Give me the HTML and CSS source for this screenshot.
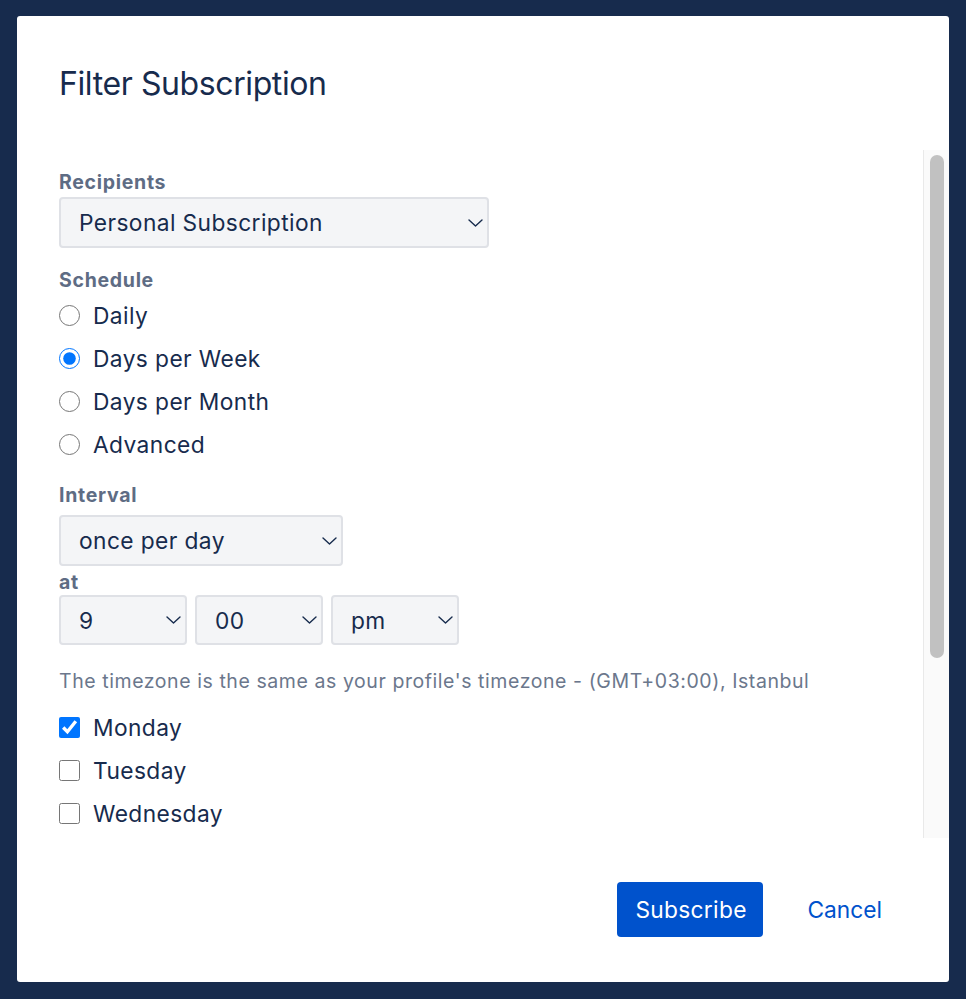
FILE: index.html
```html
<!DOCTYPE html>
<html>
<head>
<meta charset="utf-8">
<link rel="stylesheet" href="styles.css">
</head>
<body>
<div class="dialog">
  <header class="dialog-header">
    <h1 class="title">Filter Subscription</h1>
  </header>
  <div class="dialog-body">
    <div class="scroll-content">
      <div class="field-label first">Recipients</div>
      <div class="select-wrap w-recipients">
        <select class="select"><option>Personal Subscription</option></select>
        <svg class="chev" viewBox="0 0 15 8" width="15" height="8"><path d="M1 1l6.5 6 6.5-6" fill="none" stroke="#172B4D" stroke-width="1.4" stroke-linecap="round" stroke-linejoin="round"/></svg>
      </div>

      <div class="field-label">Schedule</div>
      <div class="option-list">
        <label class="option"><input type="radio" name="s"><span>Daily</span></label>
        <label class="option"><input type="radio" name="s" checked><span>Days per Week</span></label>
        <label class="option"><input type="radio" name="s"><span>Days per Month</span></label>
        <label class="option"><input type="radio" name="s"><span>Advanced</span></label>
      </div>

      <div class="field-label interval">Interval</div>
      <div class="select-wrap w-interval">
        <select class="select"><option>once per day</option></select>
        <svg class="chev" viewBox="0 0 15 8" width="15" height="8"><path d="M1 1l6.5 6 6.5-6" fill="none" stroke="#172B4D" stroke-width="1.4" stroke-linecap="round" stroke-linejoin="round"/></svg>
      </div>
      <div class="field-label at">at</div>
      <div class="time-row">
        <div class="select-wrap w-time">
          <select class="select"><option>9</option></select>
          <svg class="chev" viewBox="0 0 15 8" width="15" height="8"><path d="M1 1l6.5 6 6.5-6" fill="none" stroke="#172B4D" stroke-width="1.4" stroke-linecap="round" stroke-linejoin="round"/></svg>
        </div>
        <div class="select-wrap w-time">
          <select class="select"><option>00</option></select>
          <svg class="chev" viewBox="0 0 15 8" width="15" height="8"><path d="M1 1l6.5 6 6.5-6" fill="none" stroke="#172B4D" stroke-width="1.4" stroke-linecap="round" stroke-linejoin="round"/></svg>
        </div>
        <div class="select-wrap w-time">
          <select class="select"><option>pm</option></select>
          <svg class="chev" viewBox="0 0 15 8" width="15" height="8"><path d="M1 1l6.5 6 6.5-6" fill="none" stroke="#172B4D" stroke-width="1.4" stroke-linecap="round" stroke-linejoin="round"/></svg>
        </div>
      </div>
      <p class="hint">The timezone is the same as your profile's timezone - (GMT+03:00), Istanbul</p>
      <div class="option-list days">
        <label class="option"><input type="checkbox" checked><span>Monday</span></label>
        <label class="option"><input type="checkbox"><span>Tuesday</span></label>
        <label class="option"><input type="checkbox"><span>Wednesday</span></label>
      </div>
    </div>
    <div class="scrollbar"><div class="thumb"></div></div>
  </div>
  <footer class="dialog-footer">
    <button class="btn btn-primary">Subscribe</button>
    <button class="btn btn-link">Cancel</button>
  </footer>
</div>
</body>
</html>
```

FILE: styles.css
```css
html, body {
  margin: 0;
  padding: 0;
  background: #172B4D;
}
body {
  padding: 16px 17px 17px 17px;
  font-family: Inter, "Liberation Sans", sans-serif;
  color: #172B4D;
}
.dialog {
  width: 932px;
  height: 966px;
  background: #ffffff;
  border-radius: 3px;
  display: flex;
  flex-direction: column;
  overflow: hidden;
}
.dialog-header {
  height: 134px;
  padding: 0 42px;
  box-sizing: border-box;
  flex: none;
}
.title {
  margin: 0;
  padding-top: 48px;
  font-size: 32px;
  font-weight: 400;
  letter-spacing: -0.4px;
  line-height: 40px;
  color: #172B4D;
}
.dialog-body {
  flex: none;
  height: 688px;
  display: flex;
}
.scroll-content {
  flex: 1;
  overflow: hidden;
  padding-left: 42px;
}
.scrollbar {
  flex: none;
  width: 26px;
  box-sizing: border-box;
  background: #fafafa;
  border-left: 1px solid #e9e9e9;
  padding: 5px 5px 0 6px;
}
.thumb {
  height: 503px;
  background: #c1c1c1;
  border-radius: 7px;
}
.field-label {
  font-size: 19.5px;
  font-weight: 700;
  color: #5E6C84;
  line-height: 24px;
  letter-spacing: 0.7px;
  margin-top: 20px;
}
.field-label.first {
  margin-top: 20px;
}
.field-label.interval {
  margin-top: 17px;
}
.field-label.at {
  margin-top: 3px;
  line-height: 26px;
}
.select-wrap {
  position: relative;
  margin-top: 3px;
  height: 51px;
}
.w-recipients { width: 430px; }
.w-interval { width: 284px; margin-top: 8px; }
.w-time { width: 128px; height: 50px; margin-top: 0; }
.select {
  appearance: none;
  -webkit-appearance: none;
  width: 100%;
  height: 100%;
  box-sizing: border-box;
  background: #F4F5F7;
  border: 2px solid #DFE1E6;
  border-radius: 4px;
  padding: 0 40px 0 18px;
  font-family: inherit;
  font-size: 22.75px;
  letter-spacing: 0.4px;
  color: #172B4D;
  outline: none;
}
.chev {
  position: absolute;
  right: 6px;
  top: 50%;
  margin-top: -4px;
  pointer-events: none;
}
.time-row {
  display: flex;
  gap: 8px;
}
.option-list {
  display: flex;
  flex-direction: column;
  margin-top: 2px;
}
.option {
  display: flex;
  align-items: center;
  height: 43px;
  font-size: 22.75px;
  letter-spacing: 0.4px;
  color: #172B4D;
}
.option input {
  margin: 0 13px 0 0;
  width: 21px;
  height: 21px;
  accent-color: #0075FF;
}
.hint {
  margin: 24px 0 13px;
  font-size: 19.5px;
  line-height: 24px;
  letter-spacing: 0.57px;
  color: #6B778C;
}
.days {
  margin-top: 0;
}
.dialog-footer {
  flex: none;
  height: 144px;
  display: flex;
  justify-content: flex-end;
  align-items: flex-start;
  padding: 44px 50px 0 0;
  box-sizing: border-box;
}
.btn {
  height: 55px;
  font-family: inherit;
  font-size: 22.75px;
  letter-spacing: 0.3px;
  border: none;
  border-radius: 4px;
  padding: 0 18px;
  cursor: pointer;
}
.btn-primary {
  background: #0052CC;
  color: #ffffff;
  width: 146px;
}
.btn-link {
  background: transparent;
  color: #0052CC;
  margin-left: 26px;
  padding: 0 17px 0 18px;
  letter-spacing: 0;
}
```
